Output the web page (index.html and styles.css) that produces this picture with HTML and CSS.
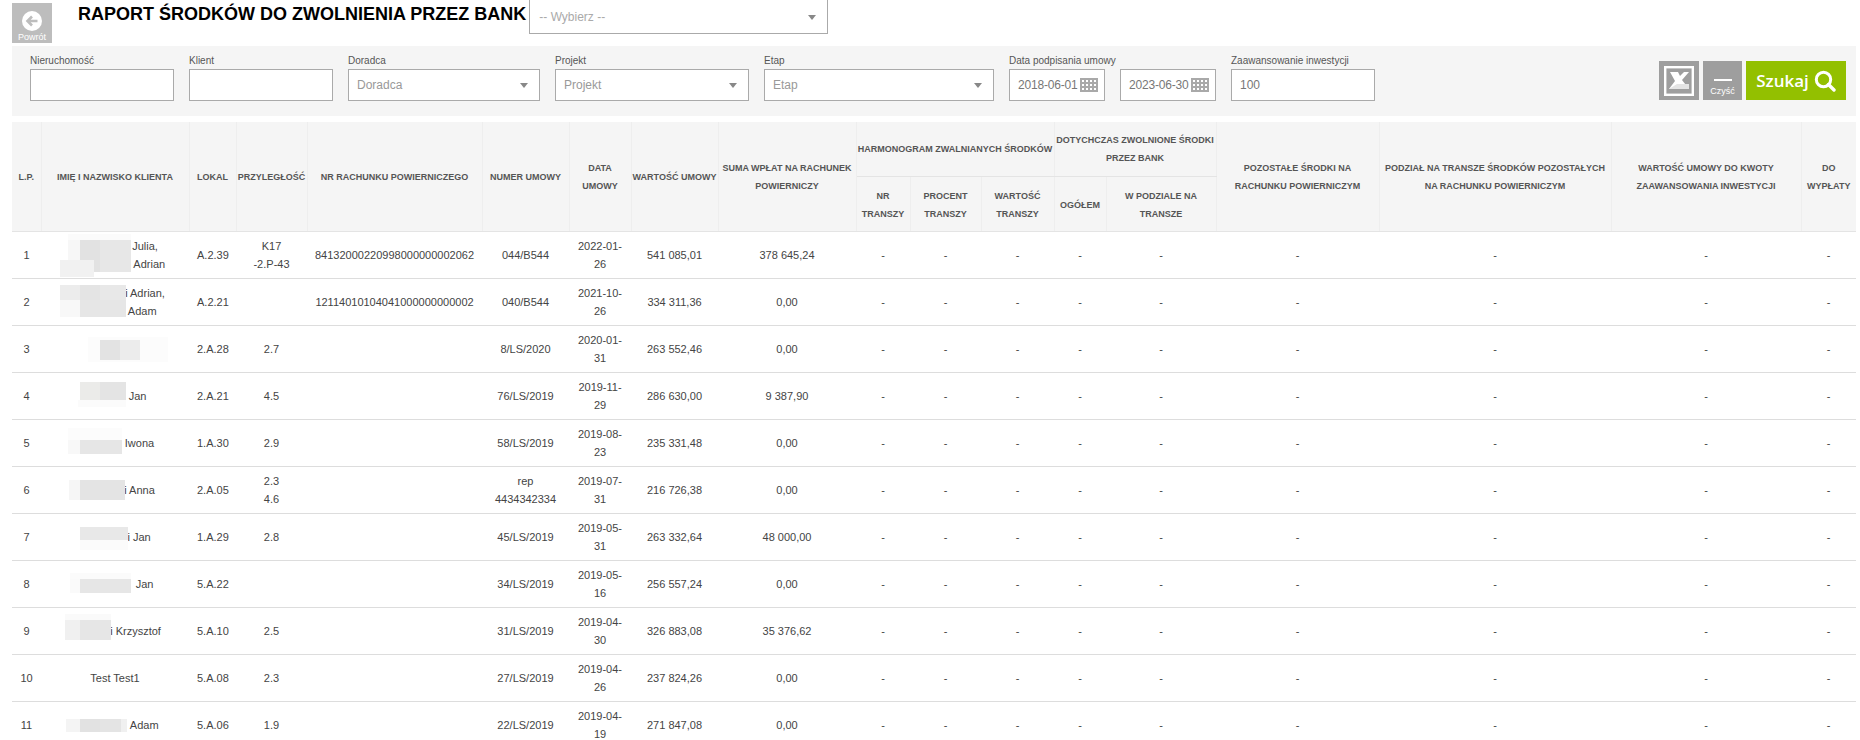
FILE: index.html
```html
<!DOCTYPE html>
<html lang="pl">
<head>
<meta charset="utf-8">
<title>Raport środków do zwolnienia przez bank</title>
<link rel="stylesheet" href="styles.css">
</head>
<body>
<header class="top">
  <a class="back">
    <svg class="back-icon" width="20" height="20" viewBox="0 0 20 20"><circle cx="10" cy="10" r="10" fill="#fff"/><path d="M15.5 10H6M10 5.5 5.5 10l4.5 4.5" fill="none" stroke="#bdbdbd" stroke-width="2.6"/></svg>
    <span>Powrót</span>
  </a>
  <h1 class="title">RAPORT ŚRODKÓW DO ZWOLNIENIA PRZEZ BANK</h1>
  <div class="top-select"><span>-- Wybierz --</span><i class="caret"></i></div>
</header>

<section class="filters">
  <label class="field f-text"><span class="lbl">Nieruchomość</span><span class="box"></span></label>
  <label class="field f-text"><span class="lbl">Klient</span><span class="box"></span></label>
  <label class="field f-adv"><span class="lbl">Doradca</span><span class="box ph">Doradca<i class="caret"></i></span></label>
  <label class="field f-proj"><span class="lbl">Projekt</span><span class="box ph">Projekt<i class="caret"></i></span></label>
  <label class="field f-stage"><span class="lbl">Etap</span><span class="box ph">Etap<i class="caret"></i></span></label>
  <div class="field f-dates">
    <span class="lbl">Data podpisania umowy</span>
    <div class="dates">
      <span class="box date">2018-06-01<svg class="cal" width="18" height="14" viewBox="0 0 18 14"><use href="#cal"/></svg></span>
      <span class="box date">2023-06-30<svg class="cal" width="18" height="14" viewBox="0 0 18 14"><use href="#cal"/></svg></span>
    </div>
  </div>
  <label class="field f-text f-last"><span class="lbl">Zaawansowanie inwestycji</span><span class="box val">100</span></label>
  <div class="actions">
    <a class="btn btn-excel">
      <svg width="30" height="30" viewBox="0 0 30 30"><rect x="1.2" y="1.2" width="27.6" height="27.6" fill="none" stroke="#fff" stroke-width="2.4"/><path d="M6 6h8l2 4 4-4h5l-7 8 7 9H15l-2-4-3 4H5l6-8z" fill="#fff"/><path d="M5 23l8-5h12v5z" fill="#e4e4e4"/></svg>
    </a>
    <a class="btn btn-clear"><i class="dash"></i><span>Czyść</span></a>
    <a class="btn btn-search"><span>Szukaj</span>
      <svg width="22" height="22" viewBox="0 0 22 22"><circle cx="9.5" cy="9.5" r="7.2" fill="none" stroke="#fff" stroke-width="3"/><path d="M14.5 14.5 20 20" stroke="#fff" stroke-width="3.4" stroke-linecap="round"/></svg>
    </a>
  </div>
</section>

<svg class="defs" width="0" height="0"><defs>
  <g id="cal"><rect width="18" height="14" fill="#a9a9a9"/><g fill="#fff"><rect x="2" y="2" width="2" height="2"/><rect x="6" y="2" width="2" height="2"/><rect x="10" y="2" width="2" height="2"/><rect x="14" y="2" width="2" height="2"/><rect x="2" y="6" width="2" height="2"/><rect x="6" y="6" width="2" height="2"/><rect x="10" y="6" width="2" height="2"/><rect x="14" y="6" width="2" height="2"/><rect x="2" y="10" width="2" height="2"/><rect x="6" y="10" width="2" height="2"/><rect x="10" y="10" width="2" height="2"/><rect x="14" y="10" width="2" height="2"/></g></g>
</defs></svg>

<table class="report">
  <colgroup>
    <col class="c1"><col class="c2"><col class="c3"><col class="c4"><col class="c5"><col class="c6"><col class="c7"><col class="c8"><col class="c9"><col class="c10"><col class="c11"><col class="c12"><col class="c13"><col class="c14"><col class="c15"><col class="c16"><col class="c17"><col class="c18">
  </colgroup>
  <thead>
    <tr class="h1">
      <th rowspan="2">L.P.</th>
      <th rowspan="2">IMIĘ I NAZWISKO KLIENTA</th>
      <th rowspan="2">LOKAL</th>
      <th rowspan="2">PRZYLEGŁOŚĆ</th>
      <th rowspan="2">NR RACHUNKU POWIERNICZEGO</th>
      <th rowspan="2">NUMER UMOWY</th>
      <th rowspan="2">DATA<br>UMOWY</th>
      <th rowspan="2">WARTOŚĆ UMOWY</th>
      <th rowspan="2">SUMA WPŁAT NA RACHUNEK<br>POWIERNICZY</th>
      <th colspan="3">HARMONOGRAM ZWALNIANYCH ŚRODKÓW</th>
      <th colspan="2">DOTYCHCZAS ZWOLNIONE ŚRODKI<br>PRZEZ BANK</th>
      <th rowspan="2">POZOSTAŁE ŚRODKI NA<br>RACHUNKU POWIERNICZYM</th>
      <th rowspan="2">PODZIAŁ NA TRANSZE ŚRODKÓW POZOSTAŁYCH<br>NA RACHUNKU POWIERNICZYM</th>
      <th rowspan="2">WARTOŚĆ UMOWY DO KWOTY<br>ZAAWANSOWANIA INWESTYCJI</th>
      <th rowspan="2">DO<br>WYPŁATY</th>
    </tr>
    <tr class="h2">
      <th>NR<br>TRANSZY</th>
      <th>PROCENT<br>TRANSZY</th>
      <th>WARTOŚĆ<br>TRANSZY</th>
      <th>OGÓŁEM</th>
      <th>W PODZIALE NA<br>TRANSZE</th>
    </tr>
  </thead>
  <tbody>
    <tr><td>1</td><td><i class="gap g57"></i> Julia,<br><i class="gap g66"></i> Adrian</td><td>A.2.39</td><td>K17<br>-2.P-43</td><td>84132000220998000000002062</td><td>044/B544</td><td>2022-01-26</td><td>541 085,01</td><td>378 645,24</td><td>-</td><td>-</td><td>-</td><td>-</td><td>-</td><td>-</td><td>-</td><td>-</td><td>-</td></tr>
    <tr><td>2</td><td><i class="gap g60"></i>i Adrian,<br><i class="gap g52"></i> Adam</td><td>A.2.21</td><td></td><td>12114010104041000000000002</td><td>040/B544</td><td>2021-10-26</td><td>334 311,36</td><td>0,00</td><td>-</td><td>-</td><td>-</td><td>-</td><td>-</td><td>-</td><td>-</td><td>-</td><td>-</td></tr>
    <tr><td>3</td><td></td><td>2.A.28</td><td>2.7</td><td></td><td>8/LS/2020</td><td>2020-01-31</td><td>263 552,46</td><td>0,00</td><td>-</td><td>-</td><td>-</td><td>-</td><td>-</td><td>-</td><td>-</td><td>-</td><td>-</td></tr>
    <tr><td>4</td><td><i class="gap g42"></i> Jan</td><td>2.A.21</td><td>4.5</td><td></td><td>76/LS/2019</td><td>2019-11-29</td><td>286 630,00</td><td>9 387,90</td><td>-</td><td>-</td><td>-</td><td>-</td><td>-</td><td>-</td><td>-</td><td>-</td><td>-</td></tr>
    <tr><td>5</td><td><i class="gap g49"></i>Iwona</td><td>1.A.30</td><td>2.9</td><td></td><td>58/LS/2019</td><td>2019-08-23</td><td>235 331,48</td><td>0,00</td><td>-</td><td>-</td><td>-</td><td>-</td><td>-</td><td>-</td><td>-</td><td>-</td><td>-</td></tr>
    <tr><td>6</td><td><i class="gap g49"></i>i Anna</td><td>2.A.05</td><td>2.3<br>4.6</td><td></td><td>rep<br>4434342334</td><td>2019-07-31</td><td>216 726,38</td><td>0,00</td><td>-</td><td>-</td><td>-</td><td>-</td><td>-</td><td>-</td><td>-</td><td>-</td><td>-</td></tr>
    <tr><td>7</td><td><i class="gap g48"></i>i Jan</td><td>1.A.29</td><td>2.8</td><td></td><td>45/LS/2019</td><td>2019-05-31</td><td>263 332,64</td><td>48 000,00</td><td>-</td><td>-</td><td>-</td><td>-</td><td>-</td><td>-</td><td>-</td><td>-</td><td>-</td></tr>
    <tr><td>8</td><td><i class="gap g56"></i> Jan</td><td>5.A.22</td><td></td><td></td><td>34/LS/2019</td><td>2019-05-16</td><td>256 557,24</td><td>0,00</td><td>-</td><td>-</td><td>-</td><td>-</td><td>-</td><td>-</td><td>-</td><td>-</td><td>-</td></tr>
    <tr><td>9</td><td><i class="gap g41"></i>i Krzysztof</td><td>5.A.10</td><td>2.5</td><td></td><td>31/LS/2019</td><td>2019-04-30</td><td>326 883,08</td><td>35 376,62</td><td>-</td><td>-</td><td>-</td><td>-</td><td>-</td><td>-</td><td>-</td><td>-</td><td>-</td></tr>
    <tr><td>10</td><td>Test Test1</td><td>5.A.08</td><td>2.3</td><td></td><td>27/LS/2019</td><td>2019-04-26</td><td>237 824,26</td><td>0,00</td><td>-</td><td>-</td><td>-</td><td>-</td><td>-</td><td>-</td><td>-</td><td>-</td><td>-</td></tr>
    <tr><td>11</td><td><i class="gap g56"></i> Adam</td><td>5.A.06</td><td>1.9</td><td></td><td>22/LS/2019</td><td>2019-04-19</td><td>271 847,08</td><td>0,00</td><td>-</td><td>-</td><td>-</td><td>-</td><td>-</td><td>-</td><td>-</td><td>-</td><td>-</td></tr>
  </tbody>
</table>

<svg class="mosaic" width="200" height="740" viewBox="0 0 200 740" aria-hidden="true">
  <rect x="68" y="234" width="63" height="6" fill="#fbfbfb"/><rect x="68" y="240" width="12" height="20" fill="#f7f7f7"/><rect x="80" y="240" width="20" height="32" fill="#e2e2e2"/><rect x="100" y="240" width="31" height="32" fill="#e7e7e7"/><rect x="60" y="260" width="34" height="17" fill="#f1f1f1"/>
  <rect x="60" y="285" width="20" height="15" fill="#ececec"/><rect x="80" y="285" width="20" height="15" fill="#e4e4e4"/><rect x="100" y="285" width="26" height="15" fill="#e8e8e8"/><rect x="60" y="300" width="20" height="17" fill="#f8f8f8"/><rect x="80" y="300" width="46" height="17" fill="#e6e6e6"/>
  <rect x="88" y="337" width="80" height="25" fill="#fcfcfc"/><rect x="100" y="340" width="20" height="20" fill="#e3e3e3"/><rect x="120" y="340" width="20" height="20" fill="#ececec"/>
  <rect x="80" y="382" width="20" height="18" fill="#ebebe9"/><rect x="100" y="382" width="26" height="18" fill="#e4e4e4"/><rect x="78" y="400" width="48" height="7" fill="#fbfbfb"/>
  <rect x="68" y="428" width="54" height="12" fill="#fcfcfc"/><rect x="68" y="440" width="12" height="14" fill="#f8f8f8"/><rect x="80" y="440" width="42" height="14" fill="#e6e6e6"/>
  <rect x="69" y="480" width="11" height="20" fill="#f6f6f6"/><rect x="80" y="480" width="45" height="20" fill="#e4e4e4"/>
  <rect x="80" y="527" width="48" height="13" fill="#e8e8e8"/><rect x="80" y="540" width="48" height="10" fill="#fbfbfb"/>
  <rect x="70" y="573" width="61" height="6" fill="#fbfbfb"/><rect x="70" y="579" width="10" height="14" fill="#fafafa"/><rect x="80" y="579" width="51" height="14" fill="#e6e6e6"/>
  <rect x="65" y="614" width="46" height="6" fill="#fafafa"/><rect x="65" y="620" width="15" height="20" fill="#f0f0f0"/><rect x="80" y="620" width="31" height="20" fill="#e6e6e6"/>
  <rect x="66" y="719" width="14" height="13" fill="#f4f4f4"/><rect x="80" y="719" width="20" height="13" fill="#e2e2e2"/><rect x="100" y="719" width="21" height="13" fill="#e4e4e4"/><rect x="121" y="719" width="6" height="13" fill="#f0f0f0"/>
</svg>
</body>
</html>
```
FILE: styles.css
```css
* { box-sizing: border-box; }
html, body { margin: 0; height: 740px; overflow: hidden; background: #fff; }
body { position: relative; padding: 0 4px 0 12px; font-family: "Liberation Sans", Arial, sans-serif; font-size: 11px; color: #555; }

.top { display: flex; align-items: flex-start; height: 46px; }
.back { width: 40px; height: 40px; margin-top: 3px; background: #bdbdbd; color: #fff; font-size: 9px; display: flex; flex-direction: column; align-items: center; padding-top: 8px; }
.back span { margin-top: 1px; line-height: 10px; }
.title { margin: 4px 3px 0 26px; font: bold 18px/21px "Liberation Sans", Arial, sans-serif; color: #000; white-space: nowrap; }
.top-select { position: relative; width: 299px; height: 34px; border: 1px solid #aaa; border-top: 0; color: #aaa; font-size: 12px; line-height: 34px; padding-left: 9px; }
.caret { position: absolute; right: 11px; top: 50%; margin-top: -2px; width: 0; height: 0; border: 4px solid transparent; border-top: 5px solid #888; border-bottom: 0; }
.top-select .caret { top: 15px; margin-top: 0; }

.filters { display: flex; height: 70px; padding: 8px 10px 0 18px; background: #f5f5f5; gap: 15px; }
.field { display: flex; flex-direction: column; }
.lbl { height: 15px; font-size: 10px; line-height: 14px; color: #555; white-space: nowrap; }
.box { position: relative; display: block; height: 32px; border: 1px solid #aaa; background: #fff; font-size: 12px; line-height: 30px; padding-left: 8px; }
.ph { color: #999; }
.val { color: #777; }
.f-text { width: 144px; }
.f-adv { width: 192px; }
.f-proj { width: 194px; }
.f-stage { width: 230px; }
.f-dates { width: 207px; }
.dates { display: flex; gap: 15px; }
.date { width: 96px; color: #777; letter-spacing: -0.2px; display: flex; align-items: center; justify-content: space-between; padding: 0 6px 0 8px; }
.cal { flex: none; }
.actions { margin-left: auto; display: flex; gap: 4px; padding-top: 7px; height: 46px; }
.btn { display: flex; height: 39px; color: #fff; align-items: center; justify-content: center; }
.btn-excel { width: 40px; background: #9e9e9e; }
.btn-clear { width: 39px; background: #9e9e9e; flex-direction: column; font-size: 9px; padding-top: 13px; }
.dash { width: 18px; height: 2px; background: #fff; margin-bottom: 5px; }
.btn-clear span { line-height: 10px; }
.btn-search { width: 100px; background: #93c000; gap: 5px; font: 600 17px/20px "Open Sans", sans-serif; }
.defs { position: absolute; }

.report { width: 1844px; table-layout: fixed; border-collapse: collapse; margin-top: 6px; text-align: center; }
.c1 { width: 29px; } .c2 { width: 148px; } .c3 { width: 47px; } .c4 { width: 71px; } .c5 { width: 175px; } .c6 { width: 87px; } .c7 { width: 62px; } .c8 { width: 87px; } .c9 { width: 138px; } .c10 { width: 54px; } .c11 { width: 71px; } .c12 { width: 73px; } .c13 { width: 52px; } .c14 { width: 110px; } .c15 { width: 163px; } .c16 { width: 232px; } .c17 { width: 190px; } .c18 { width: 55px; }
.report th { background: #f5f5f5; border: 1px solid #eee; border-width: 0 1px; border-bottom: 1px solid #e4e4e4; font-size: 9px; font-weight: bold; line-height: 18px; color: #555; padding: 1px 0 0; white-space: nowrap; overflow: hidden; }
.report th:first-child { border-left: 0; }
.report th:last-child { border-right: 0; }
.report thead { border-bottom: 1px solid #ddd; }
.h1 { height: 54px; }
.h2 { height: 55px; }
.h2 th { padding-top: 3px; }
.report td { height: 47px; padding: 4px 8px; line-height: 18px; border-bottom: 1px solid #ddd; color: #444; }
.report td:nth-child(2) { padding: 4px 2px; }
.gap { display: inline-block; height: 1px; }
.g41 { width: 41px; } .g42 { width: 42px; } .g48 { width: 48px; } .g49 { width: 49px; } .g52 { width: 52px; } .g56 { width: 56px; } .g57 { width: 57px; } .g60 { width: 60px; } .g66 { width: 66px; }
.mosaic { position: absolute; left: 0; top: 0; }
```
